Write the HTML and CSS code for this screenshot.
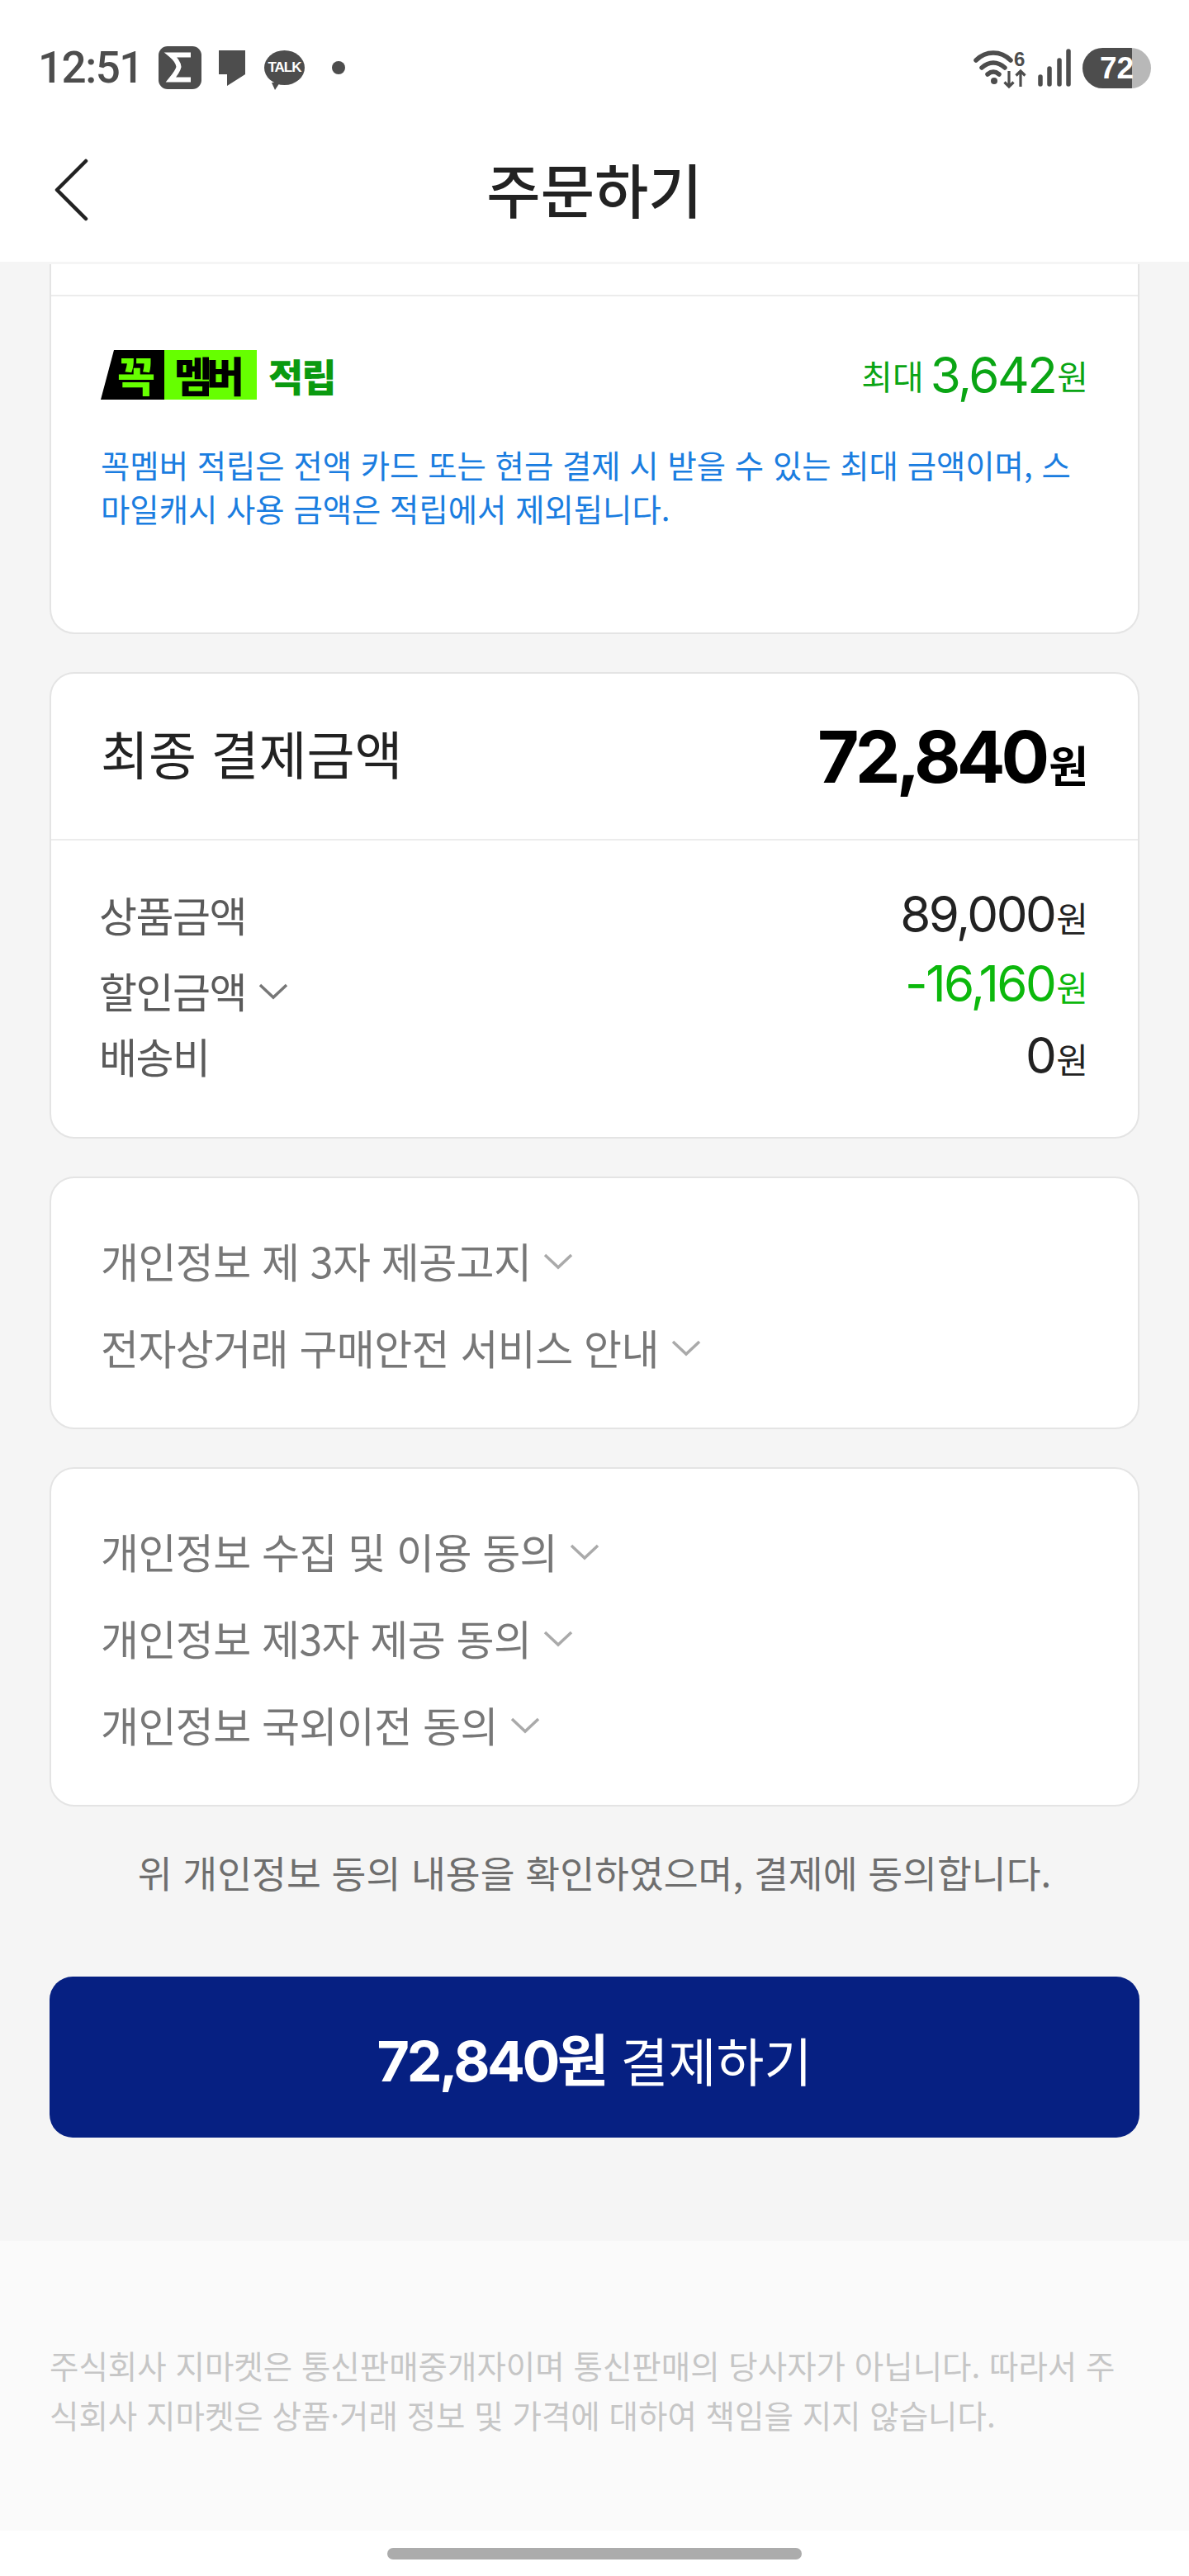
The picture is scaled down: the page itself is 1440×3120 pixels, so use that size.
FILE: index.html
```html
<!DOCTYPE html>
<html lang="ko">
<head>
    <meta charset="UTF-8">
    <meta name="viewport" content="width=device-width, initial-scale=1.0">
    <title>주문하기</title>
    <link rel="stylesheet" href="styles.css">
</head>
<body>
    <div class="top">
        <div class="status-bar">
            <div class="status-left">
                <span class="time">12:51</span>
                <svg class="icon-sigma" viewBox="0 0 52 52"><rect width="52" height="52" rx="11" fill="#4d4d4d"/><path d="M39 10.500H15c6 5 9 10 9.500 14.500-1 5-5 10-9.500 15.500H39" fill="none" stroke="#fff" stroke-width="6"/></svg>
                <svg class="icon-bubble" viewBox="0 0 32 43"><path d="M0 0h32v29L10 43V29H0z" fill="#4d4d4d"/></svg>
                <span class="icon-talk"><span>TALK</span></span>
                <span class="status-dot"></span>
            </div>
            <div class="status-right">
                <svg class="icon-wifi" viewBox="0 0 64 48">
                    <path d="M3 14C15 2 33 2 45 14M10 23c9-8 19-8 28 0M17 31c5-4 9-4 14 0" fill="none" stroke="#4d4d4d" stroke-width="5.500" stroke-linecap="round"/>
                    <circle cx="25" cy="39" r="4" fill="#4d4d4d"/>
                    <path d="M43 27v19M37.500 40.500l5.500 5.500 5.500-5.500M57 46V27M51.500 32.500l5.500-5.500 5.500 5.500" fill="none" stroke="#4d4d4d" stroke-width="3.200"/>
                    <text x="49" y="21" class="wifi-six">6</text>
                </svg>
                <svg class="icon-signal" viewBox="0 0 40 46"><path d="M3 43v-9M14 43V24M26 43V14M37 43V3" stroke="#4d4d4d" stroke-width="5.500" stroke-linecap="round"/></svg>
                <span class="battery">72</span>
            </div>
        </div>
        <div class="nav">
            <svg class="back" viewBox="0 0 42 76"><path d="M38 3L3 38l35 35" fill="none" stroke="#222" stroke-width="4.500" stroke-linecap="round" stroke-linejoin="round"/></svg>
            <h1>주문하기</h1>
        </div>
    </div>

    <div class="main">
        <div class="card card-clipped">
            <div class="clip-top"></div>
            <div class="member">
                <div class="member-row">
                    <div class="member-title">
                        <span class="logo"><span class="logo-black">꼭</span><span class="logo-green">멤버</span></span>
                        <span class="member-word">적립</span>
                    </div>
                    <div class="member-value">최대 <b>3,642</b><span>원</span></div>
                </div>
                <p class="member-note">꼭멤버 적립은 전액 카드 또는 현금 결제 시 받을 수 있는 최대 금액이며, 스마일캐시 사용 금액은 적립에서 제외됩니다.</p>
            </div>
        </div>

        <div class="card">
            <div class="total">
                <span class="total-label">최종 결제금액</span>
                <span class="total-value">72,840<span>원</span></span>
            </div>
            <div class="price-list">
                <div class="price-row"><span class="price-label">상품금액</span><span class="price-value">89,000<span>원</span></span></div>
                <div class="price-row"><span class="price-label">할인금액<svg class="chev chev-dark" viewBox="0 0 36 20"><path d="M2 2l16 15L34 2"/></svg></span><span class="price-value green">-16,160<span>원</span></span></div>
                <div class="price-row"><span class="price-label">배송비</span><span class="price-value">0<span>원</span></span></div>
            </div>
        </div>

        <div class="card links">
            <div class="link-row">개인정보 제 3자 제공고지<svg class="chev" viewBox="0 0 36 20"><path d="M2 2l16 15L34 2"/></svg></div>
            <div class="link-row">전자상거래 구매안전 서비스 안내<svg class="chev" viewBox="0 0 36 20"><path d="M2 2l16 15L34 2"/></svg></div>
        </div>

        <div class="card links">
            <div class="link-row">개인정보 수집 및 이용 동의<svg class="chev" viewBox="0 0 36 20"><path d="M2 2l16 15L34 2"/></svg></div>
            <div class="link-row">개인정보 제3자 제공 동의<svg class="chev" viewBox="0 0 36 20"><path d="M2 2l16 15L34 2"/></svg></div>
            <div class="link-row">개인정보 국외이전 동의<svg class="chev" viewBox="0 0 36 20"><path d="M2 2l16 15L34 2"/></svg></div>
        </div>

        <p class="agree">위 개인정보 동의 내용을 확인하였으며, 결제에 동의합니다.</p>
        <button class="pay"><b>72,840원</b> 결제하기</button>
    </div>

    <div class="footer">
        <p>주식회사 지마켓은 통신판매중개자이며 통신판매의 당사자가 아닙니다. 따라서 주식회사 지마켓은 상품·거래 정보 및 가격에 대하여 책임을 지지 않습니다.</p>
    </div>
    <div class="home-area"><span class="home-bar"></span></div>
</body>
</html>
```

FILE: styles.css
```css
* {
    box-sizing: border-box;
}
html, body {
    margin: 0;
    padding: 0;
}
body {
    width: 1440px;
    height: 3120px;
    overflow: hidden;
    background-color: #fff;
    font-family: Inter, "Noto Sans CJK KR", sans-serif;
    color: #1a1a1a;
}
p, h1 {
    margin: 0;
}

/* status bar */
.top {
    height: 317px;
    background-color: #fff;
}
.status-bar {
    height: 150px;
    padding: 56px 46px 0 46px;
    display: flex;
    justify-content: space-between;
    align-items: flex-start;
}
.status-left, .status-right {
    display: flex;
    align-items: center;
    height: 52px;
}
.time {
    font-family: Roboto, sans-serif;
    font-size: 53px;
    font-weight: 500;
    color: #4d4d4d;
    width: 146px;
    letter-spacing: -1.5px;
}
.icon-sigma {
    width: 52px;
    height: 52px;
}
.icon-bubble {
    width: 32px;
    height: 43px;
    margin-left: 21px;
}
.icon-talk {
    position: relative;
    width: 49px;
    height: 42px;
    margin-left: 23px;
    background-color: #4d4d4d;
    border-radius: 50%;
    color: #fff;
    font-family: "Liberation Sans", sans-serif;
    font-size: 17px;
    font-weight: bold;
    letter-spacing: -1px;
    display: flex;
    align-items: center;
    justify-content: center;
}
.icon-talk::after {
    content: "";
    position: absolute;
    left: 9px;
    bottom: -6px;
    border-left: 4px solid transparent;
    border-right: 6px solid transparent;
    border-top: 9px solid #4d4d4d;
}
.status-dot {
    width: 16px;
    height: 16px;
    margin-left: 33px;
    background-color: #4d4d4d;
    border-radius: 50%;
}
.icon-wifi {
    width: 64px;
    height: 48px;
    margin-top: 2px;
    overflow: visible;
}
.wifi-six {
    font-family: "Liberation Sans", sans-serif;
    font-size: 24px;
    font-weight: bold;
    fill: #4d4d4d;
}
.icon-signal {
    width: 40px;
    height: 46px;
    margin-left: 14px;
}
.battery {
    width: 83px;
    height: 49px;
    margin-left: 14px;
    padding-left: 21px;
    border-radius: 25px;
    background: linear-gradient(to right, #4d4d4d 60px, #b8b8b8 60px);
    color: #fff;
    font-family: "Liberation Sans", sans-serif;
    font-size: 37px;
    font-weight: bold;
    line-height: 49px;
}

/* nav */
.nav {
    height: 167px;
    position: relative;
    display: flex;
    align-items: center;
    justify-content: center;
}
.nav h1 {
    font-family: "Noto Sans CJK KR", sans-serif;
    font-size: 71px;
    font-weight: 500;
    color: #222;
    margin-top: -14px;
}
.back {
    position: absolute;
    left: 66px;
    top: 42px;
    width: 42px;
    height: 76px;
}

/* cards */
.main {
    height: 2397px;
    padding: 3px 60px 0;
    background-color: #f5f5f5;
}
.card {
    background-color: #fff;
    border: 2px solid #e4e4e4;
    border-radius: 30px;
    margin-bottom: 46px;
}
.card-clipped {
    border-top: none;
    border-top-left-radius: 0;
    border-top-right-radius: 0;
    height: 448px;
}
.clip-top {
    height: 39px;
    border-bottom: 2px solid #ececec;
}
.member {
    padding: 65px 60px 0 60px;
}
.member-row {
    display: flex;
    justify-content: space-between;
    align-items: center;
    height: 60px;
}
.member-title {
    display: flex;
    align-items: center;
}
.logo {
    display: flex;
    height: 60px;
    font-family: "Noto Sans CJK KR", sans-serif;
    font-size: 50px;
    font-weight: 900;
    line-height: 58px;
}
.logo-black {
    width: 77px;
    padding-left: 20px;
    background-color: #000;
    color: #66ff00;
    letter-spacing: -4px;
    clip-path: polygon(16px 0, 100% 0, 100% 100%, 0 100%);
}
.logo-green {
    width: 112px;
    padding-left: 12px;
    background-color: #66ff00;
    color: #000;
    letter-spacing: -7px;
}
.member-word {
    margin-left: 14px;
    font-family: "Noto Sans CJK KR", sans-serif;
    font-size: 46px;
    font-weight: 900;
    color: #0a9a10;
    letter-spacing: -2px;
}
.member-value {
    font-family: "Noto Sans CJK KR", sans-serif;
    font-size: 41px;
    color: #0aa514;
    display: flex;
    align-items: center;
    gap: 8px;
    word-spacing: -6px;
}
.member-value b {
    font-family: Inter, sans-serif;
    font-size: 60px;
    font-weight: normal;
    letter-spacing: -2.5px;
}
.member-value span {
    margin-left: -6px;
}
.member-note {
    margin-top: 52px;
    font-family: "Noto Sans CJK KR", sans-serif;
    font-size: 38.4px;
    line-height: 53px;
    color: #1a7de0;
}

/* total */
.total {
    height: 202px;
    padding: 0 60px 0 60px;
    border-bottom: 2px solid #ececec;
    display: flex;
    justify-content: space-between;
    align-items: center;
}
.total-label {
    font-family: "Noto Sans CJK KR", sans-serif;
    font-size: 63px;
    color: #222;
    margin-top: -12px;
}
.total-value {
    font-size: 87px;
    font-weight: bold;
    color: #000;
    letter-spacing: -5px;
}
.total-value span {
    font-family: "Noto Sans CJK KR", sans-serif;
    font-size: 52px;
    letter-spacing: 0;
    margin-left: 4px;
}
.price-list {
    padding: 46px 60px 0 58px;
    height: 359px;
}
.price-row {
    display: flex;
    justify-content: space-between;
    align-items: center;
    height: 86px;
}
.price-row:nth-child(2) {
    margin: 6px 0 -7px;
}
.price-label {
    font-family: "Noto Sans CJK KR", sans-serif;
    font-size: 50px;
    letter-spacing: -1.5px;
    color: #5a5a5a;
    display: flex;
    align-items: center;
}
.price-value {
    font-size: 60px;
    color: #222;
    letter-spacing: -2.5px;
}
.price-value span {
    font-family: "Noto Sans CJK KR", sans-serif;
    font-size: 42px;
    letter-spacing: 0;
    margin-left: 2px;
}
.price-value.green {
    color: #0cb80c;
    margin-top: -16px;
}

/* agreement links */
.links {
    padding: 46px 60px;
}
.link-row {
    height: 105px;
    display: flex;
    align-items: center;
    font-family: "Noto Sans CJK KR", sans-serif;
    font-size: 50px;
    letter-spacing: -0.6px;
    color: #777;
}
.chev {
    width: 36px;
    height: 20px;
    margin-left: 15px;
    margin-top: 4px;
    fill: none;
    stroke: #aaa;
    stroke-width: 3.5;
}
.chev-dark {
    stroke: #777;
}

.agree {
    margin-top: 3px;
    text-align: center;
    font-family: "Noto Sans CJK KR", sans-serif;
    font-size: 45.5px;
    line-height: 66px;
    color: #6e6e6e;
}
.pay {
    display: block;
    width: 1320px;
    height: 195px;
    margin-top: 94px;
    border: none;
    border-radius: 28px;
    background-color: #062082;
    color: #fff;
    font-family: "Noto Sans CJK KR", sans-serif;
    font-size: 63px;
}
.pay b {
    font-family: Inter, "Noto Sans CJK KR", sans-serif;
    font-size: 68px;
    letter-spacing: -3.5px;
}

/* footer */
.footer {
    height: 351px;
    padding: 120px 60px 0;
    background-color: #fafafa;
}
.footer p {
    font-family: "Noto Sans CJK KR", sans-serif;
    font-size: 38.5px;
    line-height: 60px;
    color: #c6c6c6;
}
.home-area {
    height: 55px;
    display: flex;
    justify-content: center;
    padding-top: 21px;
}
.home-bar {
    width: 502px;
    height: 14px;
    border-radius: 7px;
    background-color: #acacac;
}
```
